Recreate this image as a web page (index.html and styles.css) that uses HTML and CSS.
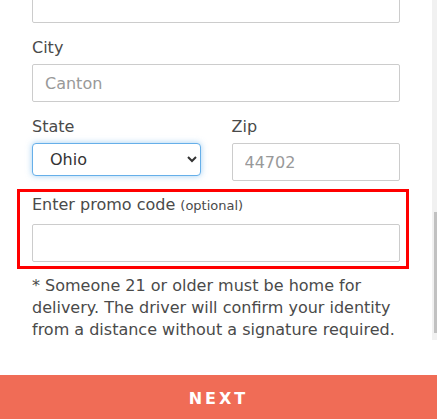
FILE: index.html
```html
<!DOCTYPE html>
<html lang="en">
<head>
    <meta charset="UTF-8">
    <meta name="viewport" content="width=device-width, initial-scale=1.0">
    <title>Delivery Address</title>
    <link rel="stylesheet" href="styles.css">
</head>
<body>
    <div class="modal">
        <div class="scroll-area">
            <div class="content">
                <div class="input-group first">
                    <input type="text" class="field">
                </div>

                <div class="input-group">
                    <label for="city">City</label>
                    <input type="text" id="city" class="field" placeholder="Canton">
                </div>

                <div class="row">
                    <div class="input-group">
                        <label for="state">State</label>
                        <select id="state" class="field select">
                            <option>Ohio</option>
                        </select>
                    </div>
                    <div class="input-group">
                        <label for="zip">Zip</label>
                        <input type="text" id="zip" class="field" placeholder="44702">
                    </div>
                </div>

                <div class="promo">
                    <label for="promo">Enter promo code <span class="optional">(optional)</span></label>
                    <input type="text" id="promo" class="field">
                </div>

                <p class="note">* Someone 21 or older must be home for delivery. The driver will confirm your identity from a distance without a signature required.</p>
            </div>
            <div class="scrollbar">
                <div class="thumb"></div>
            </div>
        </div>

        <button class="next">NEXT</button>
    </div>
</body>
</html>
```

FILE: styles.css
```css
body {
    margin: 0;
    font-family: "DejaVu Sans", sans-serif;
    color: #4a4a4a;
    background-color: white;
}
.modal {
    width: 437px;
    height: 419px;
    display: flex;
    flex-direction: column;
    overflow: hidden;
}
.scroll-area {
    height: 340px;
    display: flex;
    overflow: hidden;
}
.content {
    flex: 1;
    padding: 0 32px;
}
.scrollbar {
    width: 5px;
    background-color: #f1f1f1;
    padding-left: 2px;
    box-sizing: border-box;
}
.thumb {
    margin-top: 212px;
    height: 121px;
    background-color: #c1c1c1;
}
.input-group {
    margin-top: 15px;
}
.input-group.first {
    margin-top: -15px;
}
label {
    display: block;
    font-size: 16px;
    line-height: 20px;
    margin-bottom: 6px;
}
.field {
    display: block;
    width: 100%;
    height: 38px;
    box-sizing: border-box;
    padding: 0 12px;
    border: 1px solid #ccc;
    border-radius: 2px;
    font-family: inherit;
    font-size: 16px;
    color: #4a4a4a;
    background-color: white;
}
.field::placeholder {
    color: #999;
}
.row {
    display: grid;
    grid-template-columns: 1fr 1fr;
    column-gap: 31px;
    align-items: start;
}
.select {
    height: 33px;
    padding-left: 13px;
    color: #333;
    border-color: #66afe9;
    border-radius: 4px;
    box-shadow: 0 0 6px rgba(102, 175, 233, 0.6);
    outline: none;
}
.promo {
    margin: 8px -9px 0 -15px;
    padding: 3px 6px 4px 12px;
    border: 3px solid #f00;
}
.promo label {
    margin-bottom: 8px;
}
.optional {
    font-size: 13px;
}
.note {
    margin: 6px 0 0;
    font-size: 16px;
    line-height: 22px;
}
.next {
    margin-top: 35px;
    height: 44px;
    padding-top: 4px;
    flex-shrink: 0;
    border: none;
    background-color: #f06c56;
    color: white;
    font-family: inherit;
    font-size: 16px;
    font-weight: bold;
    letter-spacing: 3px;
    cursor: pointer;
}
```
